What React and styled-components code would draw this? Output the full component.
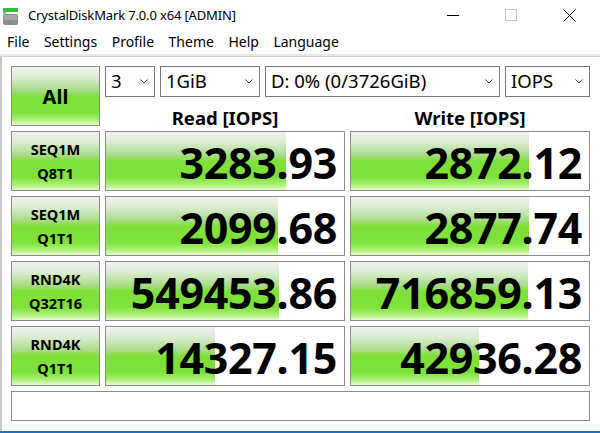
import React from "react";
import styled, { createGlobalStyle } from "styled-components";

const GlobalStyle = createGlobalStyle`
  html, body {
    margin: 0;
    padding: 0;
    background: #ffffff;
  }
  body {
    font-family: "Noto Sans", "Liberation Sans", sans-serif;
    color: #000;
  }
`;

const results = [
  { l1: "SEQ1M", l2: "Q8T1", read: "3283.93", rFill: 180, write: "2872.12", wFill: 178 },
  { l1: "SEQ1M", l2: "Q1T1", read: "2099.68", rFill: 172, write: "2877.74", wFill: 178 },
  { l1: "RND4K", l2: "Q32T16", read: "549453.86", rFill: 173, write: "716859.13", wFill: 177 },
  { l1: "RND4K", l2: "Q1T1", read: "14327.15", rFill: 109, write: "42936.28", wFill: 128 },
];

const menus = ["File", "Settings", "Profile", "Theme", "Help", "Language"];

const greenGradient = `linear-gradient(
  to bottom,
  #f1f3f0 0%,
  #d9ecd0 18%,
  #a9dc88 40%,
  #7fe03a 50%,
  #7ce238 78%,
  #a8ef72 90%,
  #e4fdcc 100%
)`;

const Chevron = () => (
  <svg width="8" height="5" viewBox="0 0 8 5">
    <polyline points="0.5,0.5 4,4 7.5,0.5" fill="none" stroke="#444" strokeWidth="1" />
  </svg>
);

const AppIcon = () => (
  <svg width="16" height="19" viewBox="0 0 16 19">
    <rect x="0" y="0" width="15" height="4" fill="#2fbf3a" />
    <rect x="0" y="4" width="3" height="2" fill="#6fd96f" />
    <rect x="0" y="6" width="15" height="11" rx="2" fill="#8c8c8c" />
    <rect x="1" y="7" width="13" height="5" fill="#a8a8a8" />
    <rect x="10" y="13" width="3" height="2" fill="#3bd23b" />
  </svg>
);

const App = () => {
  return (
    <>
      <GlobalStyle />
      <Window>
        <TitleBar>
          <TitleIcon>
            <AppIcon />
          </TitleIcon>
          <TitleText>CrystalDiskMark 7.0.0 x64 [ADMIN]</TitleText>
          <WinControls>
            <WinButton>
              <svg width="12" height="12" viewBox="0 0 12 12">
                <line x1="0" y1="6.5" x2="12" y2="6.5" stroke="#000" strokeWidth="1" />
              </svg>
            </WinButton>
            <WinButton>
              <svg width="12" height="12" viewBox="0 0 12 12">
                <rect x="0.5" y="0.5" width="11" height="11" fill="none" stroke="#c4c4c4" strokeWidth="1" />
              </svg>
            </WinButton>
            <WinButton>
              <svg width="13" height="13" viewBox="0 0 13 13">
                <line x1="0.5" y1="0.5" x2="12.5" y2="12.5" stroke="#000" strokeWidth="1" />
                <line x1="12.5" y1="0.5" x2="0.5" y2="12.5" stroke="#000" strokeWidth="1" />
              </svg>
            </WinButton>
          </WinControls>
        </TitleBar>

        <MenuBar>
          {menus.map((m) => (
            <MenuItem key={m}>{m}</MenuItem>
          ))}
        </MenuBar>

        <Body>
          <Top>
            <AllButton>All</AllButton>
            <TopRight>
              <Controls>
                <Select $w={50}>
                  <span>3</span>
                  <Chevron />
                </Select>
                <Select $w={100}>
                  <span>1GiB</span>
                  <Chevron />
                </Select>
                <Select $w={235}>
                  <span>D: 0% (0/3726GiB)</span>
                  <Chevron />
                </Select>
                <Select $w={85}>
                  <span>IOPS</span>
                  <Chevron />
                </Select>
              </Controls>
              <Headers>
                <Header>Read [IOPS]</Header>
                <Header>Write [IOPS]</Header>
              </Headers>
            </TopRight>
          </Top>

          <Rows>
            {results.map((r, i) => (
              <Row key={i}>
                <TestLabel>
                  <span>{r.l1}</span>
                  <span>{r.l2}</span>
                </TestLabel>
                <ValueBox>
                  <Fill $w={r.rFill} />
                  <Value>{r.read}</Value>
                </ValueBox>
                <ValueBox>
                  <Fill $w={r.wFill} />
                  <Value>{r.write}</Value>
                </ValueBox>
              </Row>
            ))}
          </Rows>

          <Status />
        </Body>
        <TaskEdge />
      </Window>
    </>
  );
};

export default App;

const Window = styled.div`
  width: 600px;
  height: 433px;
  display: flex;
  flex-direction: column;
  overflow: hidden;
  background: #fff;
`;

const TitleBar = styled.div`
  height: 30px;
  display: flex;
  align-items: center;
  flex-shrink: 0;
`;

const TitleIcon = styled.div`
  width: 16px;
  height: 19px;
  margin: 4px 9px 0 3px;
  display: flex;
`;

const TitleText = styled.div`
  font-size: 13px;
  line-height: 20px;
  letter-spacing: -0.15px;
  flex: 1;
`;

const WinControls = styled.div`
  display: flex;
  height: 30px;
  padding-right: 2px;
`;

const WinButton = styled.div`
  width: 58px;
  height: 30px;
  display: flex;
  align-items: center;
  justify-content: center;
`;

const MenuBar = styled.div`
  height: 24px;
  display: flex;
  align-items: center;
  padding-left: 7px;
  border-bottom: 2px solid #e8e8e8;
  box-shadow: 0 1px 0 #d0d0d0;
  flex-shrink: 0;
`;

const MenuItem = styled.div`
  font-size: 14px;
  line-height: 20px;
  margin-right: 14.5px;
`;

const Body = styled.div`
  flex: 1;
  margin-top: 1px;
  border-left: 2px solid #c8c8c8;
  padding: 9px 10px 0 9px;
  display: flex;
  flex-direction: column;
`;

const Top = styled.div`
  display: flex;
  gap: 5px;
  height: 60px;
`;

const AllButton = styled.div`
  width: 89px;
  height: 60px;
  box-sizing: border-box;
  border: 1px solid #8a8a8a;
  background: ${greenGradient};
  display: flex;
  align-items: center;
  justify-content: center;
  font-weight: 700;
  font-size: 20px;
`;

const TopRight = styled.div`
  width: 485px;
  display: flex;
  flex-direction: column;
`;

const Controls = styled.div`
  display: flex;
  gap: 5px;
  height: 31px;
`;

const Select = styled.div`
  width: ${(p) => p.$w}px;
  height: 31px;
  box-sizing: border-box;
  border: 1px solid #7a7a7a;
  background: #fff;
  display: flex;
  align-items: center;
  justify-content: space-between;
  padding: 0 6px 0 5px;
  font-size: 18.5px;
  line-height: 24px;
  span {
    margin-top: -1px;
  }
`;

const Headers = styled.div`
  display: grid;
  grid-template-columns: 240px 240px;
  column-gap: 5px;
  height: 29px;
`;

const Header = styled.div`
  display: flex;
  align-items: flex-end;
  justify-content: center;
  font-weight: 700;
  font-size: 18.5px;
  line-height: 22px;
  margin-bottom: -3px;
`;

const Rows = styled.div`
  display: flex;
  flex-direction: column;
  gap: 5px;
  margin-top: 5px;
`;

const Row = styled.div`
  display: grid;
  grid-template-columns: 89px 240px 240px;
  column-gap: 5px;
  height: 60px;
`;

const TestLabel = styled.div`
  box-sizing: border-box;
  border: 1px solid #8a8a8a;
  background: ${greenGradient};
  display: flex;
  flex-direction: column;
  align-items: center;
  justify-content: center;
  font-weight: 700;
  font-size: 14.5px;
  line-height: 24px;
`;

const ValueBox = styled.div`
  position: relative;
  box-sizing: border-box;
  border: 1px solid #8c8c8c;
  background: #fff;
  display: flex;
  align-items: center;
  justify-content: flex-end;
  padding-right: 7px;
  overflow: hidden;
`;

const Fill = styled.div`
  position: absolute;
  left: 0;
  top: 0;
  bottom: 0;
  width: ${(p) => p.$w}px;
  background: ${greenGradient};
`;

const Value = styled.div`
  position: relative;
  font-weight: 700;
  font-size: 43px;
  line-height: 50px;
  margin-top: 3px;
  letter-spacing: -0.3px;
`;

const Status = styled.div`
  margin-top: 5px;
  height: 30px;
  width: 579px;
  box-sizing: border-box;
  border: 1px solid #8c8c8c;
  background: #fff;
`;

const TaskEdge = styled.div`
  height: 2px;
  background: #1a73c8;
  flex-shrink: 0;
`;
